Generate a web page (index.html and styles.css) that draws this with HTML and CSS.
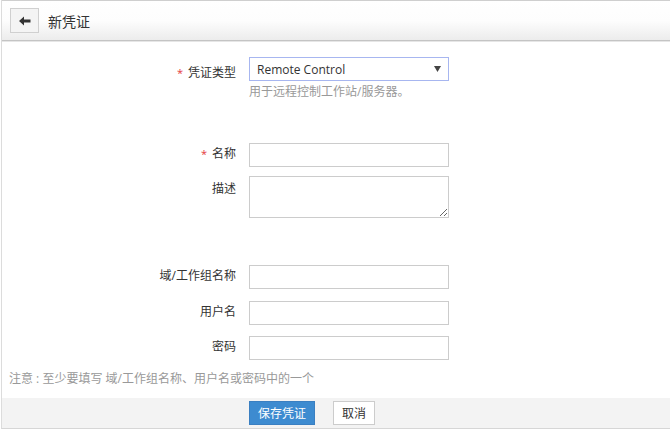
FILE: index.html
```html
<!DOCTYPE html>
<html>
<head>
<meta charset="utf-8">
<link rel="stylesheet" href="styles.css">
</head>
<body>
<div class="page">
  <div class="header">
    <button class="back" type="button">
      <svg width="12" height="10" viewBox="0 0 12 10"><path d="M0 5 L5 0.5 L5 3.5 L11.5 3.5 L11.5 6.5 L5 6.5 L5 9.5 Z" fill="#333"/></svg>
    </button>
    <span class="title">新凭证</span>
  </div>
  <div class="form">
    <div class="row row-select">
      <label class="label"><span class="req">*</span>凭证类型</label>
      <div class="field">
        <div class="select"><span>Remote Control</span><svg class="caret" width="7" height="6" viewBox="0 0 7 6"><path d="M0 0 L7 0 L3.5 6 Z" fill="#444"/></svg></div>
        <div class="help">用于远程控制工作站/服务器。</div>
      </div>
    </div>
    <div class="row row-name">
      <label class="label"><span class="req">*</span>名称</label>
      <div class="field"><input class="input" type="text"></div>
    </div>
    <div class="row row-desc">
      <label class="label">描述</label>
      <div class="field"><textarea class="textarea"></textarea></div>
    </div>
    <div class="row row-domain">
      <label class="label">域/工作组名称</label>
      <div class="field"><input class="input" type="text"></div>
    </div>
    <div class="row row-user">
      <label class="label">用户名</label>
      <div class="field"><input class="input" type="text"></div>
    </div>
    <div class="row row-pass">
      <label class="label">密码</label>
      <div class="field"><input class="input" type="password"></div>
    </div>
    <div class="note">注意 : 至少要填写 域/工作组名称、用户名或密码中的一个</div>
  </div>
  <div class="footer">
    <button class="btn btn-primary" type="button">保存凭证</button>
    <button class="btn btn-default" type="button">取消</button>
  </div>
</div>
</body>
</html>
```

FILE: styles.css
```css
html, body {
  margin: 0;
  padding: 0;
  background: #fff;
}
body {
  font-family: "Open Sans", "Noto Sans CJK SC", sans-serif;
  font-size: 12px;
  color: #333;
}
.page {
  width: 669px;
  margin-left: 1px;
  border-left: 1px solid #dcdcdc;
  border-bottom: 1px solid #d6d6d6;
  height: 429px;
  box-sizing: border-box;
  display: flex;
  flex-direction: column;
}
.header {
  height: 41px;
  box-sizing: border-box;
  border-top: 1px solid #cfcfcf;
  border-bottom: 1px solid #c4c4c4;
  box-shadow: 0 1px 0 #e6e6e6;
  background: linear-gradient(#ffffff 0%, #fdfdfd 50%, #ececec 100%);
  display: flex;
  align-items: center;
  padding-left: 8px;
}
.back {
  width: 29px;
  height: 25px;
  box-sizing: border-box;
  border: 1px solid #d0d0d0;
  background: #f4f4f4;
  padding: 0;
  margin: 0;
  display: flex;
  align-items: center;
  justify-content: center;
}
.title {
  margin-left: 9px;
  font-size: 14px;
  color: #333;
}
.form {
  flex: 1;
  padding-top: 16px;
}
.row {
  display: grid;
  grid-template-columns: 234px 200px;
  column-gap: 13px;
}
.label {
  text-align: right;
  line-height: 16px;
  padding-top: 3px;
  color: #333;
}
.req {
  color: #e4393c;
  margin-right: 5px;
  font-size: 11px;
}
.row-select .label { padding-top: 8px; }
.select {
  height: 24px;
  box-sizing: border-box;
  border: 1px solid #a7b6f0;
  display: flex;
  align-items: center;
  justify-content: space-between;
  padding: 0 7px 0 7px;
  font-size: 12px;
  color: #333;
}
.caret {
  display: block;
}
.help {
  color: #999;
  margin-top: 2px;
  line-height: 18px;
}
.row-name { margin-top: 42px; }
.row-desc { margin-top: 9px; }
.row-desc .label { padding-top: 5px; }
.row-domain { margin-top: 47px; }
.row-user { margin-top: 12px; }
.row-pass { margin-top: 11px; }
.input {
  display: block;
  width: 200px;
  height: 24px;
  box-sizing: border-box;
  border: 1px solid #cccccc;
  margin: 0;
  padding: 2px 6px;
  font-family: inherit;
  font-size: 12px;
}
.textarea {
  display: block;
  width: 200px;
  height: 42px;
  box-sizing: border-box;
  border: 1px solid #cccccc;
  margin: 0;
  padding: 2px 6px;
  font-family: inherit;
  font-size: 12px;
}
.note {
  margin-top: 10px;
  padding-left: 7px;
  color: #999;
  line-height: 18px;
}
.footer {
  height: 30px;
  background: #f3f3f3;
  display: flex;
  align-items: center;
  padding-left: 247px;
  gap: 18px;
}
.btn {
  height: 24px;
  box-sizing: border-box;
  font-family: inherit;
  font-size: 12px;
  margin: 0;
  padding: 0 8px;
}
.btn-primary {
  background: #3d8bd0;
  border: 1px solid #3a7fc1;
  color: #fff;
}
.btn-default {
  background: #fff;
  border: 1px solid #cccccc;
  color: #333;
  padding: 0 8px;
}
```
